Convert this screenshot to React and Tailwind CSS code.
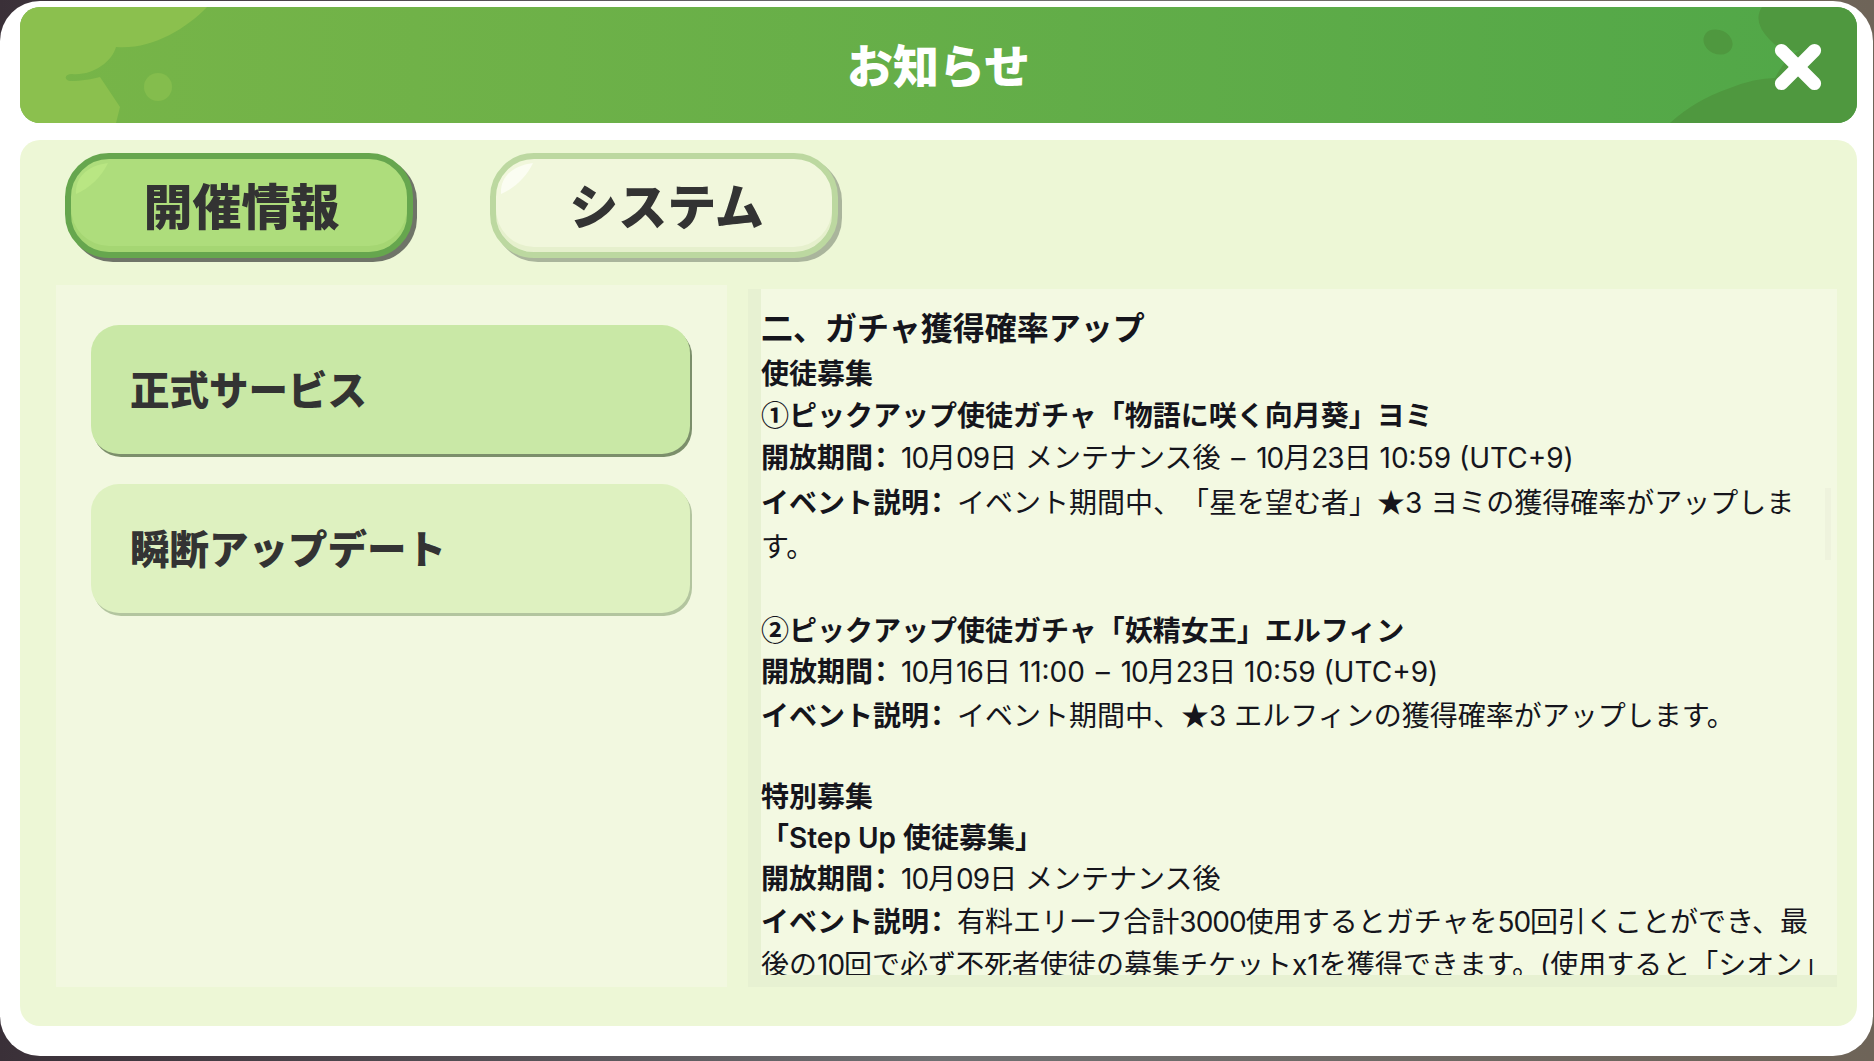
import { X } from "lucide-react"

const CJK = "font-['Noto_Sans_CJK_JP',sans-serif]"

function Gloss({ color }) {
  return (
    <svg className="absolute left-[3px] top-[3px]" width="34" height="32" viewBox="0 0 34 32">
      <path d="M2 32 C1 16 12 4 34 1 C28 14 16 26 2 32 Z" fill={color} />
    </svg>
  )
}

function Tab({ active, children }) {
  return (
    <div
      className={`relative flex h-[105px] w-[348px] items-center justify-center rounded-[44px] border-[6px] pl-[5px] pt-[5px] text-[49px] font-black text-[#333] ${
        active
          ? "border-[#66a64e] bg-[#aedd7c] shadow-[4px_4px_0_#6f7468,inset_0_-6px_0_#a5d673]"
          : "border-[#bcd8a0] bg-[#f1f7dc] shadow-[4px_4px_0_#aab59c,inset_0_-5px_0_#e6f0cd]"
      }`}
    >
      <Gloss color={active ? "#b9e683" : "#fbfdf2"} />
      <span className="relative">{children}</span>
    </div>
  )
}

function MenuItem({ active, children }) {
  return (
    <div
      className={`flex h-[129px] w-[599px] items-center rounded-[28px] pl-[39px] pt-[5px] text-[39.5px] font-extrabold text-[#333] ${
        active
          ? "bg-[#c9e8a6] shadow-[2px_3px_0_#7c8f6b]"
          : "bg-[#def1c0] shadow-[2px_3px_0_#b3c59f]"
      }`}
    >
      {children}
    </div>
  )
}

// label with the colon pulled left, the way the game's font sets it
function Label({ children }) {
  return (
    <b>
      {children}
      <span className="-ml-[6px] mr-[6px]">：</span>
    </b>
  )
}

// digits in the reference are narrower than Inter's
function Num({ children }) {
  return <span className="tracking-[-1px]">{children}</span>
}

function Dash() {
  return <span className="mx-[3px]">–</span>
}

export default function App() {
  return (
    <div className="h-[1061px] w-full overflow-hidden bg-linear-to-r from-[#3a3038] via-[#6f7072] to-[#6e6458] pt-[1px] font-['Inter','Noto_Sans_CJK_JP',sans-serif]">
      <div className="h-[1055px] w-[1873px] rounded-[40px] bg-white pl-[20px] pr-[16px] pt-[6px]">
        {/* Title bar */}
        <div className="relative flex h-[116px] items-center justify-center overflow-hidden rounded-[20px] bg-linear-to-r from-[#78b548] to-[#50a748]">
          <svg className="absolute inset-0" width="1837" height="116" viewBox="20 7 1837 116">
            <path
              d="M20 7 L207 7 C185 30 150 50 116 47 C112 62 92 76 72 74 C64 74 64 80 70 81 C82 81 92 79 100 77 L120 107 L116 123 L20 123 Z"
              fill="#8bc04e"
            />
            <ellipse cx="158" cy="87" rx="14" ry="14" fill="#84bd4d" />
            <path
              d="M1762 7 Q1752 22 1770 40 Q1780 52 1800 50 Q1785 58 1775 78 Q1755 78 1730 88 Q1695 100 1670 123 L1857 123 L1857 7 Z"
              fill="#4f983f"
            />
            <ellipse cx="1718" cy="42" rx="15" ry="12" transform="rotate(25 1718 42)" fill="#4f983f" />
          </svg>
          <h1 className="relative pt-[2px] text-[46px] font-black text-white">お知らせ</h1>
          <X className="absolute right-[26px] top-[27px] text-white" size={66} strokeWidth={4.8} />
        </div>

        {/* Panel */}
        <div className="mt-[17px] h-[886px] rounded-[20px] bg-[#edf7d6] pt-[13px]">
          <div className="flex gap-[77px] pl-[45px]">
            <Tab active>開催情報</Tab>
            <Tab>システム</Tab>
          </div>

          <div className="mt-[27px] flex items-start gap-[21px] pl-[36px]">
            {/* Category list */}
            <div className="flex h-[702px] w-[671px] flex-col gap-[30px] bg-[#f2f8e0] pl-[35px] pt-[40px]">
              <MenuItem active>正式サービス</MenuItem>
              <MenuItem>瞬断アップデート</MenuItem>
            </div>

            {/* Notice body */}
            <div className="relative mt-[4px] h-[698px] w-[1089px] bg-[#e7f1d2] pl-[13px]">
              <div className="h-[686px] overflow-hidden bg-[#f3f9e2] pr-[6px] pt-[15px] text-[28px] text-[#15151c] [text-spacing-trim:space-all]">
                <h2 className="text-[32px] font-semibold leading-[50px]">二、ガチャ獲得確率アップ</h2>
                <p className="font-bold leading-[40px]">使徒募集</p>
                <p className="font-semibold leading-[40px]"><span className={CJK}>①</span>ピックアップ使徒ガチャ「物語に咲く向月葵」ヨミ</p>
                <p className="leading-[44px]"><Label>開放期間</Label><Num>10</Num>月<Num>09</Num>日 メンテナンス後 <Dash /> <Num>10</Num>月<Num>23</Num>日 10:59 (UTC+9)</p>
                <p className="leading-[43.5px]"><Label>イベント説明</Label>イベント期間中、「星を望む者」<span className={CJK}>★</span>3 ヨミの獲得確率がアップします。</p>
                <div className="h-[40px]" />
                <p className="font-semibold leading-[40px]"><span className={CJK}>②</span>ピックアップ使徒ガチャ「妖精女王」エルフィン</p>
                <p className="leading-[43px]"><Label>開放期間</Label><Num>10</Num>月<Num>16</Num>日 11:00 <Dash /> <Num>10</Num>月<Num>23</Num>日 10:59 (UTC+9)</p>
                <p className="leading-[40px]"><Label>イベント説明</Label>イベント期間中、<span className={CJK}>★</span>3 エルフィンの獲得確率がアップします。</p>
                <div className="h-[41px]" />
                <p className="font-bold leading-[41px]">特別募集</p>
                <p className="font-semibold leading-[40px]">「Step Up 使徒募集」</p>
                <p className="leading-[43px]"><Label>開放期間</Label><Num>10</Num>月<Num>09</Num>日 メンテナンス後</p>
                <p className="leading-[43px]"><Label>イベント説明</Label>有料エリーフ合計<Num>3000</Num>使用するとガチャを<Num>50</Num>回引くことができ、最後の<Num>10</Num>回で必ず不死者使徒の募集チケットx1を獲得できます。(使用すると「シオン」</p>
              </div>
              <div className="absolute right-[6px] top-[199px] h-[72px] w-[6px] bg-[#eef3dd]" />
            </div>
          </div>
        </div>
      </div>
    </div>
  )
}
